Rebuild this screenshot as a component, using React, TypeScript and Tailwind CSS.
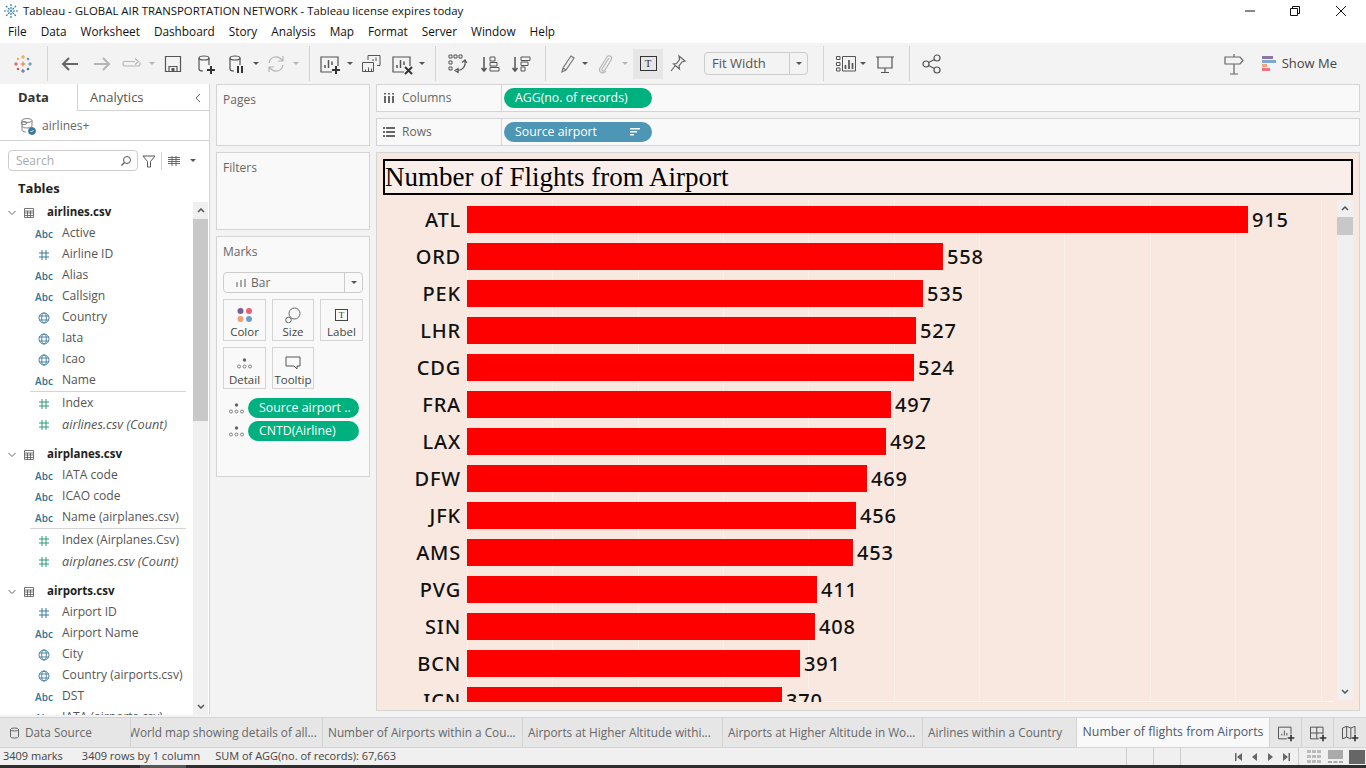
import type { ReactNode } from 'react';

const gray = '#555';
const light = '#b5b5b5';

const menus = ['File', 'Data', 'Worksheet', 'Dashboard', 'Story', 'Analysis', 'Map', 'Format', 'Server', 'Window', 'Help'];

const bars: [string, number][] = [
  ['ATL', 915], ['ORD', 558], ['PEK', 535], ['LHR', 527], ['CDG', 524], ['FRA', 497], ['LAX', 492],
  ['DFW', 469], ['JFK', 456], ['AMS', 453], ['PVG', 411], ['SIN', 408], ['BCN', 391], ['ICN', 370],
];

type FieldType = 'abc' | 'num' | 'geo' | 'measure';
type Field = { name: string; type: FieldType; italic?: boolean };
const tables: { name: string; dims: Field[]; measures: Field[] }[] = [
  {
    name: 'airlines.csv',
    dims: [
      { name: 'Active', type: 'abc' }, { name: 'Airline ID', type: 'num' }, { name: 'Alias', type: 'abc' },
      { name: 'Callsign', type: 'abc' }, { name: 'Country', type: 'geo' }, { name: 'Iata', type: 'geo' },
      { name: 'Icao', type: 'geo' }, { name: 'Name', type: 'abc' },
    ],
    measures: [{ name: 'Index', type: 'measure' }, { name: 'airlines.csv (Count)', type: 'measure', italic: true }],
  },
  {
    name: 'airplanes.csv',
    dims: [{ name: 'IATA code', type: 'abc' }, { name: 'ICAO code', type: 'abc' }, { name: 'Name (airplanes.csv)', type: 'abc' }],
    measures: [{ name: 'Index (Airplanes.Csv)', type: 'measure' }, { name: 'airplanes.csv (Count)', type: 'measure', italic: true }],
  },
  {
    name: 'airports.csv',
    dims: [
      { name: 'Airport ID', type: 'num' }, { name: 'Airport Name', type: 'abc' }, { name: 'City', type: 'geo' },
      { name: 'Country (airports.csv)', type: 'geo' }, { name: 'DST', type: 'abc' }, { name: 'IATA (airports.csv)', type: 'abc' },
    ],
    measures: [],
  },
];

const tabs = [
  { label: 'World map showing details of all...', w: 'w-[192px]', clip: true },
  { label: 'Number of Airports within a Cou...', w: 'w-[200px]' },
  { label: 'Airports at Higher Altitude withi...', w: 'w-[200px]' },
  { label: 'Airports at Higher Altitude in Wo...', w: 'w-[200px]' },
  { label: 'Airlines within a Country', w: 'w-[154px]' },
];

function Icon({ children, className = 'w-6 h-6' }: { children: ReactNode; className?: string }) {
  return (
    <svg viewBox="0 0 24 24" fill="none" strokeWidth="1.2" className={`${className} shrink-0`}>
      {children}
    </svg>
  );
}

function Caret({ className = '', color = gray }: { className?: string; color?: string }) {
  return (
    <svg viewBox="0 0 8 4" className={`w-2 h-[3px] shrink-0 ${className}`}>
      <path d="M0 0h8L4 4z" fill={color} />
    </svg>
  );
}

function Sep({ className }: { className: string }) {
  return <div className={`w-px h-[35px] bg-[#d4d4d4] shrink-0 ${className}`} />;
}

function Plus() {
  return <path d="M18 14v8M14 18h8" stroke="#333" strokeWidth="2" />;
}

function TableauLogo() {
  const marks: [number, number, string, number][] = [
    [12, 12, '#e8762b', 2.5], [12, 5, '#e8a03a', 2], [12, 19, '#5b6591', 2], [5, 12, '#d8503f', 2],
    [19, 12, '#5b8fa8', 2], [7, 7, '#e8a03a', 1.2], [17, 7, '#4e79a7', 1.2], [7, 17, '#c72035', 1.2], [17, 17, '#1f447e', 1.2],
  ];
  return (
    <Icon className="w-6 h-6 ml-[11px]">
      {marks.map(([x, y, c, r]) => (
        <path key={`${x}-${y}`} d={`M${x - r} ${y}h${r * 2}M${x} ${y - r}v${r * 2}`} stroke={c} strokeWidth="1" />
      ))}
    </Icon>
  );
}

function Toolbar() {
  return (
    <div className="h-[41px] bg-[#f3f3f3] flex items-center shrink-0">
      <TableauLogo />
      <Sep className="ml-3" />
      <Icon className="w-6 h-6 ml-2.5"><path d="M20 12H5M11 6l-6 6 6 6" stroke="#666" strokeWidth="2" /></Icon>
      <Icon className="w-6 h-6 ml-2"><path d="M4 12h15M13 6l6 6-6 6" stroke={light} strokeWidth="2" /></Icon>
      <Icon className="w-6 h-6 ml-1.5">
        <path d="M3 11c0-1 .6-1.500 1.500-1.500H15M20 10.500V12c0 1-.6 2-1.500 2h-14C3.600 14 3 13 3 12v-1M15 6.500l3.500 3-3.500 3" stroke={light} />
      </Icon>
      <Caret className="ml-1" color={light} />
      <Icon className="w-6 h-6 ml-[5px]">
        <path d="M4.500 4.500h15v15h-15zM8 19.500v-5h8v5" stroke={gray} />
        <path d="M10.500 16h3v3.500h-3z" fill={gray} />
      </Icon>
      <Icon className="w-6 h-6 ml-2">
        <ellipse cx="11" cy="6" rx="5" ry="2" stroke={gray} />
        <path d="M6 6v11c0 1 1.500 2 4 2M16 6v7" stroke={gray} />
        <Plus />
      </Icon>
      <Icon className="w-6 h-6 ml-[7px]">
        <ellipse cx="11" cy="6" rx="5" ry="2" stroke={gray} />
        <path d="M6 6v11c0 1 1.500 2 4 2M16 6v7" stroke={gray} />
        <path d="M14 14v7M18 14v7" stroke="#333" strokeWidth="2" />
      </Icon>
      <Caret className="ml-1" />
      <Icon className="w-6 h-6 ml-1">
        <path d="M5 11a7 7 0 0 1 12-4l2 2M19 13a7 7 0 0 1-12 4l-2-2M19 4v5h-5M5 20v-5h5" stroke={light} />
      </Icon>
      <Caret className="ml-1" color={light} />
      <Sep className="ml-[9px]" />
      <Icon className="w-6 h-6 ml-2">
        <path d="M14 20H3V5h17v9" stroke={gray} />
        <path d="M7 16v-3M10.500 16V8M14 13V9.500" stroke={gray} strokeWidth="1.500" />
        <Plus />
      </Icon>
      <Caret className="ml-1" />
      <Icon className="w-6 h-6 ml-[5px]">
        <path d="M9 8V3.500h12v10h-3M14 9V7M17 9V5.500" stroke={gray} strokeWidth="1" />
        <path d="M3.500 10.500h11v9h-11zM6.500 19.500v-2M9.500 19.500v-4M12.500 19.500v-3" stroke={gray} strokeWidth="1" />
      </Icon>
      <Icon className="w-6 h-6 ml-[7px]">
        <path d="M14 20H3V5h17v9" stroke={gray} />
        <path d="M7 16v-3M10.500 16V8M14 13V9.500" stroke={gray} strokeWidth="1.500" />
        <path d="M15 15l7 7M22 15l-7 7" stroke="#333" strokeWidth="2" />
      </Icon>
      <Caret className="ml-1" />
      <Sep className="ml-[9px]" />
      <Icon className="w-6 h-6 ml-[9px]">
        <path d="M4 3h3v3H4zM9 3h3v3H9zM14 3h3v3h-3zM4 9h3v3H4zM4 15h3v3H4z" stroke={gray} strokeWidth="1" />
        <path d="M20 9c1 5-2 9-7 9.500M10 18.500l3-2v4zM17 10.500l3-2.500 2 3" stroke={gray} />
      </Icon>
      <Icon className="w-6 h-6 ml-[9px]">
        <path d="M6 5v14M3.500 16l2.500 3 2.500-3" stroke={gray} strokeWidth="1.500" />
        <path d="M12 5h5v4h-5zM12 10.500h7v3.500h-7zM12 15.500h9v3.500h-9z" stroke={gray} strokeWidth="1" />
      </Icon>
      <Icon className="w-6 h-6 ml-[7px]">
        <path d="M6 5v14M3.500 16l2.500 3 2.500-3" stroke={gray} strokeWidth="1.500" />
        <path d="M12 5h9v3.500h-9zM12 10h7v3.500h-7zM12 15h4v4h-4z" stroke={gray} strokeWidth="1" />
      </Icon>
      <Sep className="ml-3" />
      <Icon className="w-6 h-6 ml-2.5">
        <path d="M15 4l3 2-8 12-4 2 1-4zM7 16l3 2" stroke="#777" />
      </Icon>
      <Caret className="ml-px" />
      <Icon className="w-6 h-6 ml-1">
        <path d="M16 6l-7 11c-1 2 2 3 3 1l6-10c2-3-2-6-4-3L7 16c-2 4 3 7 6 3" stroke={light} />
      </Icon>
      <Caret className="ml-1" color={light} />
      <div className="w-[30px] h-[30px] ml-1 bg-[#e6e6e6] flex items-center justify-center shrink-0">
        <div className="w-[17px] h-[15px] border border-[#333] flex items-center justify-center text-[11px] leading-none text-[#333] font-['Liberation_Serif']">T</div>
      </div>
      <Icon className="w-6 h-6 ml-0.5">
        <path d="M14 4l6 5-3 1-3 4 .5 3-6-5 3-.5 3-4zM10 14l-4 5" stroke="#666" />
      </Icon>
      <div className="w-[104px] h-[23px] ml-[15px] rounded-sm border border-[#ccc] flex items-center shrink-0">
        <div className="w-[84px] pl-[7px] text-[13px] text-[#555]">Fit Width</div>
        <div className="flex-1 h-full border-l border-[#ccc] flex items-center justify-center"><Caret /></div>
      </div>
      <Sep className="ml-[15px]" />
      <Icon className="w-6 h-6 ml-2.5">
        <path d="M2.500 4.500h3.500v3h-3.500zM2.500 10.500h3.500v3h-3.500zM2.500 16h3.500v3h-3.500zM8.500 4.500h13v14.500h-13z" stroke={gray} strokeWidth="1" />
        <path d="M11.500 17v-4M15 17V8M18.500 17v-6" stroke={gray} strokeWidth="1.700" />
      </Icon>
      <Caret className="ml-px" />
      <Icon className="w-6 h-6 ml-1.5">
        <path d="M3 5h18M5 5v11h14V5M12 16v4M8 20.500h8" stroke={gray} />
      </Icon>
      <Sep className="ml-3" />
      <Icon className="w-6 h-6 ml-2.5">
        <circle cx="6" cy="12" r="3" stroke={gray} />
        <circle cx="17" cy="6" r="3" stroke={gray} />
        <circle cx="17" cy="18" r="3" stroke={gray} />
        <path d="M8.500 10.500l6-3M8.500 13.500l6 3" stroke={gray} />
      </Icon>
      <Icon className="w-6 h-6 ml-auto">
        <path d="M12 2v3M3 5h15l3 3.500-3 3.500H3zM12 12v10M8 22h8" stroke="#666" />
      </Icon>
      <div className="ml-4 mr-[29px] flex items-center shrink-0">
        <div className="w-[15px] flex flex-col gap-px mr-[5px]">
          <div className="h-[3px] w-[11px] bg-[#8a76a0]" />
          <div className="h-[3px] w-[14px] bg-[#7fa6cf]" />
          <div className="h-[3px] w-[5px] bg-[#f2a27c]" />
          <div className="h-[3px] w-2 bg-[#f4727f]" />
        </div>
        <span className="text-[13px] text-[#444]">Show Me</span>
      </div>
    </div>
  );
}

function TypeIcon({ type }: { type: FieldType }) {
  if (type === 'abc') {
    return <span className="text-[10px] leading-none text-[#2f7396] font-semibold">Abc</span>;
  }
  if (type === 'geo') {
    return (
      <svg viewBox="0 0 12 12" fill="none" className="w-3 h-3" stroke="#3b7a9c" strokeWidth="0.900">
        <circle cx="6" cy="6" r="5" />
        <ellipse cx="6" cy="6" rx="2.300" ry="5" />
        <path d="M1 4h10M1 8h10" />
      </svg>
    );
  }
  const c = type === 'measure' ? '#2f9a7a' : '#3b7a9c';
  return (
    <svg viewBox="0 0 12 12" fill="none" className="w-3 h-3" stroke={c} strokeWidth="1">
      <path d="M4 1v10M8 1v10M1 4h10M1 8h10" />
    </svg>
  );
}

function FieldRow({ field }: { field: Field }) {
  return (
    <div className="h-[21px] flex items-center">
      <div className="w-[62px] pl-[32px] pr-[6px] flex items-center justify-center shrink-0"><TypeIcon type={field.type} /></div>
      <span className={`whitespace-nowrap text-[#555] ${field.italic ? 'italic text-[12.700px]' : 'text-[12.100px]'}`}>{field.name}</span>
    </div>
  );
}

function DataPane() {
  return (
    <div className="w-[210px] shrink-0 bg-white border-r border-[#d4d4d4] flex flex-col overflow-hidden">
      <div className="h-[27px] flex shrink-0">
        <div className="w-[78px] border-r border-[#d4d4d4] pl-[18px] flex items-center text-[13px] font-bold text-[#333]">Data</div>
        <div className="flex-1 border-b border-[#d4d4d4] pl-3 pt-px flex items-center justify-between text-[13px] text-[#555]">
          Analytics
          <svg viewBox="0 0 8 10" fill="none" className="w-2 h-2.5 mr-[7px]" stroke="#666"><path d="M6 1L2 5l4 4" /></svg>
        </div>
      </div>
      <div className="h-[30px] border-b border-[#d4d4d4] flex items-center pl-[19px] text-[12px] text-[#666] shrink-0">
        <svg viewBox="0 0 18 18" fill="none" className="w-[18px] h-[18px] mr-[5px]" stroke="#777" strokeWidth="0.900">
          <ellipse cx="8" cy="3.500" rx="5" ry="2" />
          <path d="M3 3.500V9c0 1 2 2 5 2s5-1 5-2V3.500M3 9v4c0 1 1.500 2 4 2" />
          <ellipse cx="5" cy="6" rx="3" ry="1.500" />
          <circle cx="13" cy="14" r="3.500" fill="#3b7a9c" stroke="#3b7a9c" />
          <path d="M11.500 14l1 1 2-2" stroke="#fff" />
        </svg>
        airlines+
      </div>
      <div className="h-[39px] flex items-center pl-2 shrink-0">
        <div className="w-[130px] h-[21px] border border-[#ccc] rounded-sm flex items-center justify-between px-[5px]">
          <span className="text-[12px] text-[#aaa] ml-0.5">Search</span>
          <svg viewBox="0 0 12 12" fill="none" className="w-3 h-3" stroke="#555"><circle cx="7" cy="5" r="3.500" /><path d="M4.500 7.500L1.500 10.500" strokeWidth="1.300" /></svg>
        </div>
        <svg viewBox="0 0 14 14" fill="none" className="w-[14px] h-[14px] ml-1" stroke="#555"><path d="M1 2h12L8.500 7.500V13h-3V7.500z" /></svg>
        <div className="w-px h-[18px] bg-[#d4d4d4] ml-[5px]" />
        <svg viewBox="0 0 12 10" className="w-3 h-2.5 ml-1.5" stroke="#666" fill="none" strokeWidth="1"><path d="M0 1.500h12M0 3.500h12M0 5.500h12M0 7.500h12M4 0v10M8 0v10" /></svg>
        <Caret className="ml-[9px]" />
      </div>
      <div className="h-4 mt-px mb-[5px] pl-[18px] flex items-center text-[13px] font-bold text-[#222] shrink-0">Tables</div>
      <div className="flex-1 flex min-h-0">
        <div className="flex-1 min-w-0 overflow-hidden">
          {tables.map((t, i) => (
            <div key={t.name} className={i > 0 ? 'mt-[9px]' : ''}>
              <div className="h-[21px] flex items-center">
                <svg viewBox="0 0 8 6" fill="none" className="w-2 h-1.5 ml-2 shrink-0" stroke="#666"><path d="M.5 1L4 4.500 7.500 1" /></svg>
                <svg viewBox="0 0 10 10" fill="none" className="w-2.5 h-2.5 ml-[8px] shrink-0" stroke="#555" strokeWidth="0.800"><path d="M.5.500h9v9h-9zM.5 3h9M.5 5h9M.5 7.500h9M3.500 3v6.500M6.500 3v6.500" /></svg>
                <span className="ml-[13px] text-[11.500px] font-bold text-[#222] -translate-y-px">{t.name}</span>
              </div>
              {t.dims.map(f => <FieldRow key={f.name} field={f} />)}
              {t.measures.length > 0 && <div className="h-px bg-[#d4d4d4] ml-[30px] mr-[7px] mb-px" />}
              {t.measures.map(f => <FieldRow key={f.name} field={f} />)}
            </div>
          ))}
        </div>
        <div className="w-[15px] mr-px bg-[#f0f0f0] flex flex-col shrink-0">
          <div className="h-[17px] flex items-center justify-center"><svg viewBox="0 0 8 5" fill="none" className="w-2 h-[5px]" stroke="#555" strokeWidth="1.500"><path d="M1 4l3-3 3 3" /></svg></div>
          <div className="h-[202px] bg-[#c8c8c8]" />
          <div className="flex-1" />
          <div className="h-[17px] flex items-center justify-center"><svg viewBox="0 0 8 5" fill="none" className="w-2 h-[5px]" stroke="#555" strokeWidth="1.500"><path d="M1 1l3 3 3-3" /></svg></div>
        </div>
      </div>
    </div>
  );
}

function Pill({ label, className = '' }: { label: string; className?: string }) {
  return (
    <div className={`h-5 rounded-full bg-[#00b180] text-white text-[12.300px] flex items-center pl-[11px] whitespace-nowrap ${className}`}>{label}</div>
  );
}

function DetailDots() {
  return (
    <svg viewBox="0 0 15 11" fill="none" className="w-[15px] h-[11px] shrink-0">
      <circle cx="7.500" cy="2" r="1.700" fill="#666" />
      <circle cx="2" cy="8.500" r="1.500" stroke="#666" strokeWidth="0.800" />
      <circle cx="7.500" cy="8.500" r="1.500" stroke="#666" strokeWidth="0.800" />
      <circle cx="13" cy="8.500" r="1.500" stroke="#666" strokeWidth="0.800" />
    </svg>
  );
}

function MarkCard({ label, children }: { label: string; children: ReactNode }) {
  return (
    <div className="h-[42px] border border-[#d4d4d4] flex flex-col items-center justify-between pt-[5px] pb-px">
      <div className="h-5 flex items-center">{children}</div>
      <span className="text-[11.500px] leading-[14px] text-[#444]">{label}</span>
    </div>
  );
}

function ShelvesPane() {
  return (
    <div className="w-[154px] ml-1.5 shrink-0 flex flex-col gap-1.5">
      <div className="h-[62px] bg-[#f9f9f9] border border-[#d4d4d4] px-1.5 pt-1.5 text-[12px] text-[#666]">Pages</div>
      <div className="h-[78px] bg-[#f9f9f9] border border-[#d4d4d4] px-1.5 pt-1.5 text-[12px] text-[#666]">Filters</div>
      <div className="h-[241px] bg-[#f9f9f9] border border-[#d4d4d4] px-1.5 pt-1.5 text-[12px] text-[#666]">
        Marks
        <div className="mt-[11px] h-[21px] border border-[#ccc] rounded-sm flex items-center">
          <svg viewBox="0 0 10 8" className="w-2.5 h-2 ml-3" fill="#aaa"><path d="M0 3h2v5H0zM4 1h2v7H4zM8 0h2v8H8z" /></svg>
          <span className="ml-[5px] flex-1 text-[12px]">Bar</span>
          <div className="w-[18px] h-full border-l border-[#ccc] flex items-center justify-center"><Caret /></div>
        </div>
        <div className="mt-1.5 grid grid-cols-[43px_42px_43px] gap-x-1.5 gap-y-1.5">
          <MarkCard label="Color">
            <svg viewBox="0 0 16 16" className="w-4 h-4">
              <circle cx="3.500" cy="4" r="3" fill="#7b5f91" /><circle cx="12" cy="4" r="3" fill="#ee5e72" />
              <circle cx="3.500" cy="12" r="3" fill="#f0a070" /><circle cx="12" cy="12" r="3" fill="#6f9bc8" />
            </svg>
          </MarkCard>
          <MarkCard label="Size">
            <svg viewBox="0 0 16 16" fill="none" className="w-4 h-4" stroke="#666"><circle cx="9.500" cy="6.500" r="5.500" /><circle cx="3.500" cy="13" r="2.800" fill="#f9f9f9" /></svg>
          </MarkCard>
          <MarkCard label="Label">
            <div className="w-[13px] h-3 border border-[#444] flex items-center justify-center text-[9px] leading-none font-['Liberation_Serif'] text-[#333]">T</div>
          </MarkCard>
          <MarkCard label="Detail"><DetailDots /></MarkCard>
          <MarkCard label="Tooltip">
            <svg viewBox="0 0 16 14" fill="none" className="w-4 h-3.5" stroke="#555"><path d="M1 1h14v9h-3v3l-3-3H1z" /></svg>
          </MarkCard>
        </div>
        <div className="mt-[9px] ml-1.5 flex flex-col gap-[3px]">
          <div className="flex items-center gap-1"><DetailDots /><Pill label="Source airport .." className="w-[111px]" /></div>
          <div className="flex items-center gap-1"><DetailDots /><Pill label="CNTD(Airline)" className="w-[111px]" /></div>
        </div>
      </div>
    </div>
  );
}

function Shelf({ label, icon, pill }: { label: string; icon: ReactNode; pill: ReactNode }) {
  return (
    <div className="h-[28px] bg-[#f9f9f9] border border-[#d4d4d4] flex items-center">
      <div className="w-[125px] h-full border-r border-[#d4d4d4] flex items-center pl-1.5 text-[12px] text-[#666] shrink-0">
        <div className="w-[12px] mr-[7px] flex justify-center">{icon}</div>
        {label}
      </div>
      {pill}
    </div>
  );
}

function Chart() {
  const gridLines = [0, 1, 2, 3, 4, 5, 6, 7, 8, 9, 10];
  return (
    <div className="relative flex-1 h-[502px] overflow-hidden">
      <div className="absolute inset-y-0 left-[90px] right-0 border-b border-white/60">
        {gridLines.map(g => (
          <div key={g} className="absolute top-0 bottom-0 w-px bg-white/30" style={{ left: g * 85.35 }} />
        ))}
      </div>
      <div className="relative pt-[6px] flex flex-col gap-[10px] font-['Noto_Sans',sans-serif]">
        {bars.map(([code, value]) => (
          <div key={code} className="h-[27px] flex items-center shrink-0">
            <div className="w-[84px] text-right text-[20px] leading-none tracking-[0.8px] text-[#111] font-medium">{code}</div>
            <div className="h-[27px] ml-1.5 bg-[#ff0000] shrink-0" style={{ width: Math.floor(value * 0.8536) }} />
            <span className="ml-1 text-[20px] leading-none tracking-[0.8px] text-[#111] font-medium">{value}</span>
          </div>
        ))}
      </div>
    </div>
  );
}

function Viz() {
  return (
    <div className="h-[559px] bg-[#f9e8e0] border border-[#d4d4d4] flex flex-col pt-1.5">
      <div className="h-[36px] mx-1.5 border-2 border-black bg-[#f9eee9] flex items-center font-['Liberation_Serif'] text-[27px] leading-none text-black">
        Number of Flights from Airport
      </div>
      <div className="mt-[5px] flex">
        <Chart />
        <div className="w-4 mr-1.5 bg-[#f0f0f0] flex flex-col shrink-0 h-[500px] ml-[3px]">
          <div className="h-[17px] flex items-center justify-center"><svg viewBox="0 0 8 5" fill="none" className="w-2 h-[5px]" stroke="#555" strokeWidth="1.500"><path d="M1 4l3-3 3 3" /></svg></div>
          <div className="h-[18px] bg-[#c8c8c8]" />
          <div className="flex-1" />
          <div className="h-[17px] flex items-center justify-center"><svg viewBox="0 0 8 5" fill="none" className="w-2 h-[5px]" stroke="#555" strokeWidth="1.500"><path d="M1 1l3 3 3-3" /></svg></div>
        </div>
      </div>
    </div>
  );
}

function TabBar() {
  return (
    <div className="h-[30px] bg-[#e6e6e6] border-t border-[#d4d4d4] flex shrink-0 text-[11.800px] text-[#666] mt-0.5">
      <div className="w-[131px] border-r border-[#d4d4d4] flex items-center pl-2.5 shrink-0">
        <svg viewBox="0 0 9 12" fill="none" className="w-[9px] h-3 mr-1.5" stroke="#666"><ellipse cx="4.500" cy="2.500" rx="4" ry="1.500" /><path d="M.5 2.500v7c0 1 1.500 1.500 4 1.500s4-.5 4-1.500v-7" /></svg>
        Data Source
      </div>
      {tabs.map(t => (
        <div key={t.label} className={`${t.w} border-r border-[#d4d4d4] flex items-center overflow-hidden whitespace-nowrap shrink-0 ${t.clip ? '-indent-[2px]' : 'pl-[5px]'}`}>
          {t.label}
        </div>
      ))}
      <div className="w-[193px] bg-[#f9f9f9] border-r border-[#d4d4d4] flex items-center justify-center font-medium text-[#4a5a70] text-[12.300px] shrink-0 whitespace-nowrap">
        Number of flights from Airports
      </div>
      <div className="w-8 border-r border-[#d4d4d4] flex items-center justify-center shrink-0">
        <Icon className="w-5 h-5"><path d="M13 19H3V5h15v8M7 15v-2M10 15V9M13 15v-3" stroke={gray} /><Plus /></Icon>
      </div>
      <div className="w-8 border-r border-[#d4d4d4] flex items-center justify-center shrink-0">
        <Icon className="w-5 h-5"><path d="M13 19H3V5h15v8M3 12h15M10.500 5v14" stroke={gray} /><Plus /></Icon>
      </div>
      <div className="flex-1 flex items-center justify-center">
        <Icon className="w-5 h-5"><path d="M13 19l-5-2-5 2V6l5-2 5 2 5-2v9M8 4v13M13 6v13" stroke={gray} /><Plus /></Icon>
      </div>
    </div>
  );
}

function StatusBar() {
  return (
    <div className="h-[18px] bg-[#f0f0f0] border-t border-[#d4d4d4] flex items-center text-[11px] text-[#444] shrink-0 whitespace-nowrap">
      <span className="ml-[3px]">3409 marks</span>
      <span className="ml-[19px]">3409 rows by 1 column</span>
      <span className="ml-[15px]">SUM of AGG(no. of records): 67,663</span>
      <div className="ml-auto flex h-full items-center">
        <div className="w-px h-full bg-[#ccc]" />
        <div className="w-px h-full bg-[#ccc] ml-[26px]" />
        <div className="w-px h-full bg-[#ccc] ml-[26px]" />
        <svg viewBox="0 0 60 8" className="w-[60px] h-2 ml-[54px]" fill="#666">
          <path d="M0 0h1.500v8H0zM7 0v8L2 4zM22 0v8l-5-4zM33 0v8l5-4zM48 0v8l5-4zM53.500 0h1.500v8h-1.500z" />
        </svg>
        <div className="w-px h-full bg-[#ccc] ml-[3px]" />
        <svg viewBox="0 0 15 13" className="w-[15px] h-[13px] ml-2" fill="#bbb">
          <path d="M0 0h4v3H0zM5 0h4v3H5zM10 0h4v3h-4zM0 5h4v3H0zM5 5h4v3H5zM10 5h4v3h-4zM0 10h4v3H0zM5 10h4v3H5zM10 10h4v3h-4z" />
        </svg>
        <svg viewBox="0 0 15 13" className="w-[15px] h-[13px] ml-1.5" fill="#aaa">
          <path d="M0 0h15v9H0zM0 11h4v2H0zM5.500 11h4v2h-4zM11 11h4v2h-4z" />
        </svg>
        <div className="w-4 h-[14px] bg-[#666] ml-1.5 mr-px" />
      </div>
    </div>
  );
}

export default function App() {
  return (
    <div className="w-[1366px] h-[768px] overflow-hidden flex flex-col bg-[#f3f3f3] font-['Open_Sans','Noto_Sans',sans-serif]">
      <div className="h-[21px] bg-white flex items-center shrink-0 text-[11.400px] text-[#111]">
        <svg viewBox="0 0 16 16" fill="none" className="w-4 h-4 ml-[3px] mr-1" stroke="#2a7ab0" strokeWidth="1.200">
          <path d="M8 1v14M1 8h14M3 3l10 10M13 3L3 13" strokeDasharray="2 1" />
        </svg>
        Tableau - GLOBAL AIR TRANSPORTATION NETWORK - Tableau license expires today
        <div className="ml-auto flex items-center">
          <svg viewBox="0 0 10 10" className="w-2.5 h-2.5" stroke="#111" fill="none"><path d="M0 5h10" /></svg>
          <svg viewBox="0 0 10 10" className="w-2.5 h-2.5 ml-[35px]" stroke="#111" fill="none"><path d="M.5 2.500h7v7h-7zM2.500 2.500v-2h7v7h-2" /></svg>
          <svg viewBox="0 0 10 10" className="w-2.5 h-2.5 ml-9 mr-5" stroke="#111" fill="none"><path d="M0 0l10 10M10 0L0 10" /></svg>
        </div>
      </div>
      <div className="h-[22px] bg-white flex items-center gap-[14px] pl-2 shrink-0 text-[11.800px] text-[#111]">
        {menus.map(m => <span key={m}>{m}</span>)}
      </div>
      <Toolbar />
      <div className="flex-1 flex min-h-0">
        <DataPane />
        <ShelvesPane />
        <div className="flex-1 ml-1.5 mr-1.5 flex flex-col gap-1.5 min-w-0">
          <Shelf
            label="Columns"
            icon={<svg viewBox="0 0 10 10" className="w-2.5 h-2.5" fill="#666"><path d="M0 3h2v7H0zM4 3h2v7H4zM8 3h2v7H8zM0 0h2v1.500H0zM4 0h2v1.500H4zM8 0h2v1.500H8z" /></svg>}
            pill={<Pill label="AGG(no. of records)" className="w-[148px] ml-0.5" />}
          />
          <Shelf
            label="Rows"
            icon={<svg viewBox="0 0 12 10" className="w-3 h-2.5" fill="#666"><path d="M0 0h2v2H0zM3 0h9v2H3zM0 4h2v2H0zM3 4h9v2H3zM0 8h2v2H0zM3 8h9v2H3z" /></svg>}
            pill={
              <div className="w-[148px] h-5 ml-0.5 rounded-full bg-[#4e96b5] text-white text-[12.300px] flex items-center justify-between pl-[11px] pr-3">
                Source airport
                <svg viewBox="0 0 10 8" className="w-2.5 h-2" fill="#fff"><path d="M0 0h10v1.500H0zM0 3h7v1.500H0zM0 6h4v1.500H0z" /></svg>
              </div>
            }
          />
          <Viz />
        </div>
      </div>
      <TabBar />
      <StatusBar />
      <div className="h-[3px] bg-[#2e2e2e] shrink-0 flex"><div className="ml-[140px] w-[46px] bg-[#555]" /></div>
    </div>
  );
}
